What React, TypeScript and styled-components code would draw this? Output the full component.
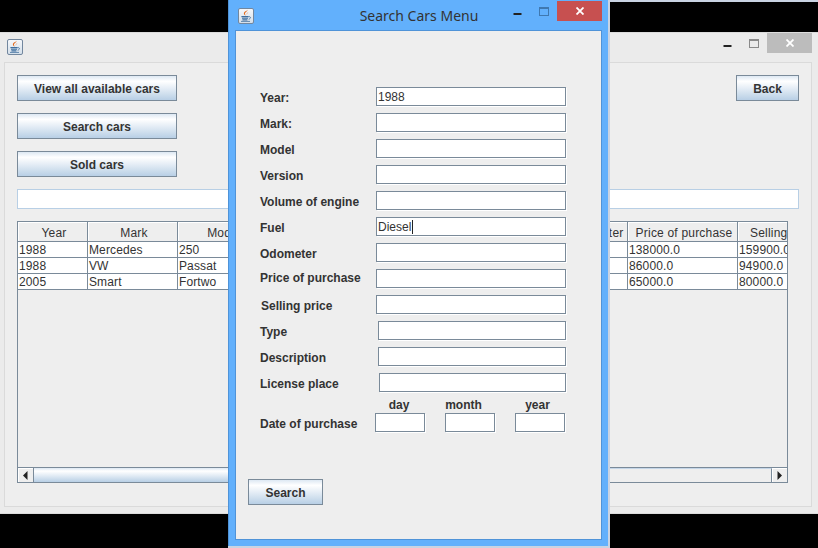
import React from 'react';
import styled, { createGlobalStyle } from 'styled-components';

const METAL = '#7a8a99';
const GRADIENT = 'linear-gradient(#dde8f3 0%, #ffffff 22%, #e6eef6 50%, #b8cfe5 100%)';
const TABLE_COLUMNS = '70px 90px 90px 90px 114px 90px 66px 110px 90px';

const GlobalStyle = createGlobalStyle`
    html, body {
        margin: 0;
        background: #000;
    }
    * {
        box-sizing: border-box;
    }
`;

const Desktop = styled.div`
    position: relative;
    width: 818px;
    height: 548px;
    overflow: hidden;
    background: #000;
    font-family: 'Liberation Sans', Arial, sans-serif;
    font-size: 12px;
    color: #333;
`;

const TopStrip = styled.div`
    position: absolute;
    top: 0;
    left: 610px;
    right: 0;
    height: 2px;
    background: #c9d3e2;
`;

/* main window, behind the dialog */
const MainWindow = styled.div`
    position: absolute;
    top: 32px;
    left: 0;
    width: 818px;
    height: 482px;
    display: flex;
    flex-direction: column;
    background: #ebebeb;
    border-top: 1px solid #dcdcdc;
    border-bottom: 1px solid #dcdcdc;
`;

const TitleBar = styled.div<{ $height: number; $iconLeft: number; $right: number }>`
    flex: none;
    height: ${p => p.$height}px;
    display: flex;
    align-items: flex-start;
    padding-left: ${p => p.$iconLeft}px;
    padding-right: ${p => p.$right}px;
`;

const IconSlot = styled.div<{ $top: number }>`
    flex: none;
    width: 16px;
    height: 16px;
    margin-top: ${p => p.$top}px;
`;

const TitleText = styled.div`
    flex: 1;
    height: 30px;
    line-height: 32px;
    text-align: center;
    font-family: 'Noto Sans', sans-serif;
    font-size: 14px;
    color: #333;
    padding-left: 80px;
`;

const Spacer = styled.div`
    flex: 1;
`;

const Controls = styled.div<{ $top: number }>`
    flex: none;
    display: flex;
    margin-top: ${p => p.$top}px;
`;

const ControlButton = styled.div<{ $width: number; $bg?: string }>`
    width: ${p => p.$width}px;
    height: 20px;
    background: ${p => p.$bg ?? 'transparent'};
    display: flex;
    align-items: center;
    justify-content: center;
`;

const MainPanel = styled.div`
    flex: 1;
    margin: 0 6px 6px 4px;
    padding: 12px 12px 0;
    background: #eeeeee;
    border: 1px solid #dadada;
    display: flex;
    flex-direction: column;
    gap: 12px;
`;

const TopRow = styled.div`
    display: flex;
    justify-content: space-between;
    align-items: flex-start;
`;

const ButtonColumn = styled.div`
    display: flex;
    flex-direction: column;
    gap: 12px;
`;

const MetalButton = styled.div<{ $width: number }>`
    width: ${p => p.$width}px;
    height: 26px;
    padding-top: 1px;
    border: 1px solid ${METAL};
    background: ${GRADIENT};
    display: flex;
    align-items: center;
    justify-content: center;
    font-weight: bold;
    color: #333;
`;

const FilterField = styled.div`
    height: 20px;
    background: #fff;
    border: 1px solid #b8cfe5;
`;

const TableBox = styled.div`
    width: 771px;
    height: 262px;
    border: 1px solid ${METAL};
    border-bottom: none;
    display: flex;
    flex-direction: column;
    background: #eeeeee;
    overflow: hidden;
`;

const TableGrid = styled.div`
    flex: 1;
    overflow: hidden;
`;

const HeaderRow = styled.div`
    display: grid;
    grid-template-columns: ${TABLE_COLUMNS};
    height: 20px;
    border-bottom: 1px solid ${METAL};
`;

const HeaderCell = styled.div`
    border-right: 1px solid ${METAL};
    box-shadow: inset 1px 1px 0 #fff;
    padding-left: 3px;
    line-height: 22px;
    letter-spacing: 0.2px;
    text-align: center;
    white-space: nowrap;
    overflow: hidden;
`;

const DataRow = styled.div`
    display: grid;
    grid-template-columns: ${TABLE_COLUMNS};
    height: 16px;
    background: #fff;
    border-bottom: 1px solid ${METAL};
`;

const DataCell = styled.div`
    border-right: 1px solid ${METAL};
    padding-left: 1px;
    line-height: 17px;
    letter-spacing: 0.12px;
    white-space: nowrap;
    overflow: hidden;
`;

const ScrollBar = styled.div`
    flex: none;
    height: 16px;
    display: flex;
    border-top: 1px solid ${METAL};
    border-bottom: 1px solid ${METAL};
`;

const ScrollArrow = styled.div`
    flex: none;
    width: 15px;
    display: flex;
    align-items: center;
    justify-content: center;
    background: #eeeeee;
    box-shadow: inset 1px 1px 0 #fff;
`;

const ScrollThumb = styled.div`
    flex: none;
    width: 300px;
    background: ${GRADIENT};
    border-left: 1px solid ${METAL};
    border-right: 1px solid ${METAL};
`;

const ScrollTrack = styled.div`
    flex: 1;
    background: #eeeeee;
    border-top: 1px solid #c5d6e8;
    border-right: 1px solid ${METAL};
`;

/* dialog */
const Dialog = styled.div`
    position: absolute;
    top: 0;
    left: 228px;
    width: 382px;
    height: 548px;
    display: flex;
    flex-direction: column;
    background: #62b0fc;
    border-right: 2px solid #c9d3e2;
    border-bottom: 2px solid #c9d3e2;
    box-shadow: inset 1px 0 0 #4f93d8;
`;

const DialogPanel = styled.div`
    flex: 1;
    margin: 0 6px 6px 7px;
    padding: 56px 35px 0 24px;
    background: #eeeeee;
    border: 1px solid #4f93d8;
    display: flex;
    flex-direction: column;
`;

const FormRows = styled.div`
    display: flex;
    flex-direction: column;
    gap: 6px;
`;

const FormRow = styled.div`
    height: 20px;
    display: flex;
    align-items: flex-start;
`;

const RowLabel = styled.div<{ $indent?: number; $raise?: number }>`
    flex: none;
    width: 116px;
    height: 20px;
    padding-left: ${p => p.$indent ?? 0}px;
    line-height: ${p => 22 - (p.$raise ?? 0) * 2}px;
    font-weight: bold;
    white-space: nowrap;
`;

const TextBox = styled.div<{ $inset?: number }>`
    flex: 1;
    height: 19px;
    margin-left: ${p => p.$inset ?? 0}px;
    background: #fff;
    border: 1px solid ${METAL};
    box-shadow: 1px 1px 0 #fff;
    padding-left: 1px;
    display: flex;
    align-items: center;
`;

const Caret = styled.span`
    display: inline-block;
    width: 1px;
    height: 14px;
    background: #222;
    margin-left: 1px;
`;

const DateHeads = styled.div`
    height: 15px;
    margin-top: 5px;
    margin-left: 115px;
    display: grid;
    grid-template-columns: repeat(3, 50px);
    column-gap: 20px;
`;

const DateHead = styled.div<{ $pad: number }>`
    padding-right: ${p => p.$pad}px;
    text-align: center;
    font-weight: bold;
    line-height: 15px;
`;

const DateRow = styled.div`
    height: 20px;
    display: flex;
    align-items: flex-start;
`;

const DateLabel = styled.div`
    flex: none;
    width: 115px;
    font-weight: bold;
    line-height: 22px;
    white-space: nowrap;
`;

const DateBoxes = styled.div`
    display: grid;
    grid-template-columns: repeat(3, 50px);
    column-gap: 20px;
`;

const DateBox = styled.div`
    height: 19px;
    background: #fff;
    border: 1px solid ${METAL};
    box-shadow: 1px 1px 0 #fff;
`;

const SearchSlot = styled.div`
    margin-top: 46px;
    margin-left: -12px;
`;

const JavaIcon = () => (
    <svg width="16" height="16" viewBox="0 0 16 16">
        <defs>
            <linearGradient id="javaBg" x1="0" y1="0" x2="0" y2="1">
                <stop offset="0" stopColor="#f6f8fb" />
                <stop offset="1" stopColor="#d3dee9" />
            </linearGradient>
        </defs>
        <rect x="0.5" y="0.5" width="15" height="15" rx="1.5" fill="url(#javaBg)" stroke="#72879e" />
        <path d="M9.4 1.8c.6 1.6-2.6 2.4-2.4 4.2.1.8.6 1.2 1 1.6-1.2-.4-2.3-1.2-2.1-2.6.2-1.5 2.9-1.8 3.5-3.2zM10.4 4.6c-1 .6-1.8 1.1-1.3 2.4-.8-1.1-.2-2.1 1.3-2.4z" fill="#e2691c" />
        <path d="M3.4 8.6h7.2M4 10.3h6M4.4 11.9h5" stroke="#3f6f9f" strokeWidth="1.1" fill="none" />
        <path d="M10.6 8.7c2.3-.5 2.6 1.8.1 2.6" stroke="#3f6f9f" strokeWidth="0.9" fill="none" />
        <path d="M3 13.4h9" stroke="#5f86ad" strokeWidth="1" fill="none" />
    </svg>
);

const MinimizeGlyph = () => (
    <svg width="9" height="2" viewBox="0 0 9 2" style={{ marginTop: 6 }}>
        <rect width="8" height="2" x="0.5" fill="#222" />
    </svg>
);

const RestoreGlyph = ({ color }: { color: string }) => (
    <svg width="10" height="9" viewBox="0 0 10 9">
        <rect x="0.5" y="0.5" width="9" height="8" fill="none" stroke={color} />
        <rect x="0" y="0" width="10" height="2" fill={color} />
    </svg>
);

const CloseGlyph = () => (
    <svg width="8" height="8" viewBox="0 0 8 8">
        <path d="M0.5 0.5L7.5 7.5M7.5 0.5L0.5 7.5" stroke="#fff" strokeWidth="1.8" />
    </svg>
);

const ArrowGlyph = ({ dir }: { dir: 'left' | 'right' }) => (
    <svg width="5" height="9" viewBox="0 0 5 9">
        <path d={dir === 'left' ? 'M0 4.5L4.5 0V9z' : 'M0.5 0L5 4.5L0.5 9z'} fill="#222" />
    </svg>
);

const columns = ['Year', 'Mark', 'Model', 'Version', 'Volume of engine', 'Fuel', 'Odometer', 'Price of purchase', 'Selling price'];

const cars = [
    ['1988', 'Mercedes', '250', '', '', '', '', '138000.0', '159900.0'],
    ['1988', 'VW', 'Passat', '', '', '', '', '86000.0', '94900.0'],
    ['2005', 'Smart', 'Fortwo', '', '', '', '', '65000.0', '80000.0'],
];

const fields: { label: string; value?: string; caret?: boolean; inset?: number; indent?: number; raise?: number }[] = [
    { label: 'Year:', value: '1988' },
    { label: 'Mark:' },
    { label: 'Model' },
    { label: 'Version' },
    { label: 'Volume of engine' },
    { label: 'Fuel', value: 'Diesel', caret: true },
    { label: 'Odometer' },
    { label: 'Price of purchase', raise: 2 },
    { label: 'Selling price', indent: 1 },
    { label: 'Type', inset: 2 },
    { label: 'Description', inset: 2 },
    { label: 'License place', inset: 3 },
];

const App = () => (
    <Desktop>
        <GlobalStyle />
        <TopStrip />

        <MainWindow>
            <TitleBar $height={29} $iconLeft={7} $right={6}>
                <IconSlot $top={6}>
                    <JavaIcon />
                </IconSlot>
                <Spacer />
                <Controls $top={0}>
                    <ControlButton $width={27}>
                        <MinimizeGlyph />
                    </ControlButton>
                    <ControlButton $width={26}>
                        <RestoreGlyph color="#8a8a8a" />
                    </ControlButton>
                    <ControlButton $width={45} $bg="#bcbcbc">
                        <CloseGlyph />
                    </ControlButton>
                </Controls>
            </TitleBar>

            <MainPanel>
                <TopRow>
                    <ButtonColumn>
                        <MetalButton $width={160}>View all available cars</MetalButton>
                        <MetalButton $width={160}>Search cars</MetalButton>
                        <MetalButton $width={160}>Sold cars</MetalButton>
                    </ButtonColumn>
                    <MetalButton $width={63}>Back</MetalButton>
                </TopRow>

                <FilterField />

                <TableBox>
                    <TableGrid>
                        <HeaderRow>
                            {columns.map(c => (
                                <HeaderCell key={c}>{c}</HeaderCell>
                            ))}
                        </HeaderRow>
                        {cars.map((car, i) => (
                            <DataRow key={i}>
                                {car.map((v, j) => (
                                    <DataCell key={j}>{v}</DataCell>
                                ))}
                            </DataRow>
                        ))}
                    </TableGrid>
                    <ScrollBar>
                        <ScrollArrow>
                            <ArrowGlyph dir="left" />
                        </ScrollArrow>
                        <ScrollThumb />
                        <ScrollTrack />
                        <ScrollArrow>
                            <ArrowGlyph dir="right" />
                        </ScrollArrow>
                    </ScrollBar>
                </TableBox>
            </MainPanel>
        </MainWindow>

        <Dialog>
            <TitleBar $height={30} $iconLeft={10} $right={6}>
                <IconSlot $top={8}>
                    <JavaIcon />
                </IconSlot>
                <TitleText>Search Cars Menu</TitleText>
                <Controls $top={1}>
                    <ControlButton $width={27}>
                        <MinimizeGlyph />
                    </ControlButton>
                    <ControlButton $width={26}>
                        <RestoreGlyph color="#3f78b0" />
                    </ControlButton>
                    <ControlButton $width={45} $bg="#c75050">
                        <CloseGlyph />
                    </ControlButton>
                </Controls>
            </TitleBar>

            <DialogPanel>
                <FormRows>
                    {fields.map(f => (
                        <FormRow key={f.label}>
                            <RowLabel $indent={f.indent} $raise={f.raise}>
                                {f.label}
                            </RowLabel>
                            <TextBox $inset={f.inset}>
                                {f.value}
                                {f.caret ? <Caret /> : null}
                            </TextBox>
                        </FormRow>
                    ))}
                </FormRows>

                <DateHeads>
                    <DateHead $pad={2}>day</DateHead>
                    <DateHead $pad={13}>month</DateHead>
                    <DateHead $pad={5}>year</DateHead>
                </DateHeads>
                <DateRow>
                    <DateLabel>Date of purchase</DateLabel>
                    <DateBoxes>
                        <DateBox />
                        <DateBox />
                        <DateBox />
                    </DateBoxes>
                </DateRow>

                <SearchSlot>
                    <MetalButton $width={75}>Search</MetalButton>
                </SearchSlot>
            </DialogPanel>
        </Dialog>
    </Desktop>
);

export default App;
